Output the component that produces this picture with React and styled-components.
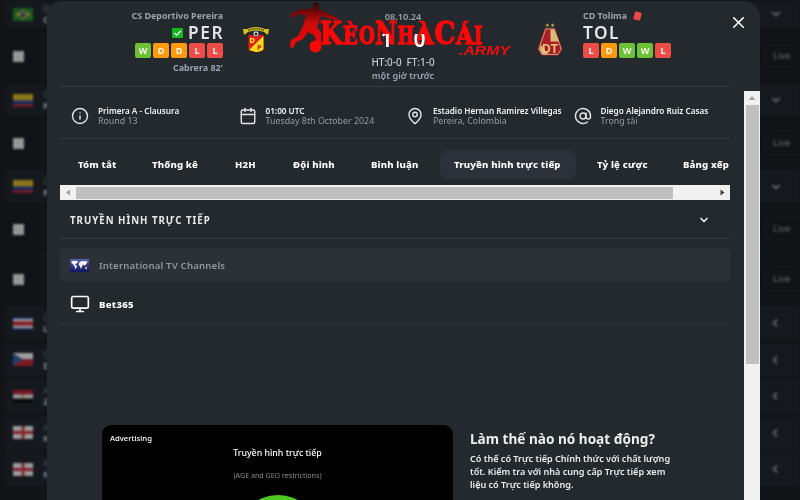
import React from "react";
import styled, { createGlobalStyle } from "styled-components";
import { Info, Calendar, MapPin, AtSign, Monitor, X, ChevronDown, ChevronLeft } from "lucide-react";

const GlobalStyle = createGlobalStyle`
  * {
    box-sizing: border-box;
  }
  body {
    margin: 0;
    background: #111316;
    font-family: 'Noto Sans', sans-serif;
    overflow: hidden;
  }
  svg {
    display: block;
    flex-shrink: 0;
  }
`;

const Page = styled.div`
  position: relative;
  width: 800px;
  height: 500px;
  overflow: hidden;
`;

/* ---------- dimmed list behind the dialog ---------- */

const List = styled.div`
  display: flex;
  flex-direction: column;
  height: 500px;
  overflow: hidden;
  filter: blur(0.8px);
`;

const ListRow = styled.div`
  display: flex;
  align-items: center;
  flex-shrink: 0;
  height: ${(p) => p.$h}px;
  margin: 0 0 ${(p) => p.$gap || 0}px 5px;
  padding-left: 8px;
  background: ${(p) => (p.$head ? "#15191d" : "transparent")};
  box-shadow: ${(p) => (p.$line ? "0 -1px 0 #181b1f" : "none")};
  color: #595e62;
`;

const League = styled.div`
  margin-left: 10px;
  width: 700px;
  font-size: 9px;
  line-height: 11px;
  color: #4a4f53;

  b {
    display: block;
    color: #7d8083;
  }
`;

const Check = styled.div`
  width: 11px;
  height: 11px;
  background: #959595;
`;

const Right = styled.div`
  margin-left: auto;
  width: 35px;
  padding-left: ${(p) => p.$pad || 0}px;
`;

const LiveButton = styled.div`
  width: 44px;
  height: 24px;
  padding-left: 7px;
  border: 1px solid #1b1e21;
  border-radius: 4px;
  font-size: 9.3px;
  font-weight: 500;
  line-height: 21px;
  color: #626365;
`;

/* ---------- dialog ---------- */

const Dialog = styled.div`
  position: absolute;
  left: 47px;
  top: 1px;
  width: 713px;
  height: 499px;
  display: flex;
  flex-direction: column;
  border-radius: 16px 16px 0 0;
  background: #24292d;
  overflow: hidden;
`;

const Header = styled.div`
  display: grid;
  grid-template-columns: 163px 66px 228px 66px 110px 1fr;
  height: 86px;
  margin: 0 30px 0 13px;
  padding-top: 9px;
  border-bottom: 1px solid #363b44;
`;

const Team = styled.div`
  display: flex;
  flex-direction: column;
  align-items: ${(p) => (p.$right ? "flex-end" : "flex-start")};
  color: #9ea1b0;
  font-size: 8.95px;
  font-weight: 700;
  line-height: 12px;
  white-space: nowrap;
`;

const TeamName = styled.div`
  display: flex;
  align-items: center;
  gap: 7px;
`;

const Short = styled.div`
  display: flex;
  align-items: center;
  gap: 5px;
  height: 21px;
  margin-right: -1px;
  font-size: 17.3px;
  font-weight: 600;
  letter-spacing: 1.5px;
  color: #e4e5e8;
`;

const RedCard = styled.div`
  width: 7px;
  height: 8px;
  border-radius: 1px;
  background: #ee4a45;
  transform: rotate(16deg);
`;

const Form = styled.div`
  display: flex;
  gap: 2px;
  margin-bottom: 4px;
`;

const colors = { W: "#6cc234", D: "#ff9a0a", L: "#ee4c47" };

const Badge = styled.span`
  width: 16px;
  height: 15px;
  border-radius: 2px;
  background: ${(p) => colors[p.$r]};
  color: #f6f3ec;
  font-size: 9px;
  line-height: 16px;
  text-align: center;
`;

const CrestBox = styled.div`
  display: flex;
  justify-content: center;
  padding-top: ${(p) => p.$top}px;
`;

const Center = styled.div`
  position: relative;
  z-index: 2;
  text-align: center;
  font-size: 9.2px;
  font-weight: 600;
  line-height: 13px;
  color: #9ea1b0;
`;

const Score = styled.div`
  display: flex;
  justify-content: center;
  gap: 21px;
  height: 33px;
  font-size: 21px;
  font-weight: 600;
  line-height: 33px;
  color: #fff;
  clip-path: inset(11px 0 0 0);
`;

const Halves = styled.div`
  color: #c9ccd3;
  font-size: 9.9px;
  font-weight: 500;
  word-spacing: 2.5px;
`;

const Close = styled.div`
  justify-self: end;
  padding-top: 3px;
  margin-right: -18px;
  color: #fff;
`;

const Logo = styled.svg`
  position: absolute;
  left: 239px;
  top: -1px;
`;

const Body = styled.div`
  display: flex;
  flex: 1;
  min-height: 0;
`;

const Content = styled.div`
  flex: 1;
  min-width: 0;
  padding: 0 14px 0 13px;
  overflow: hidden;
`;

const VScroll = styled.div`
  display: flex;
  flex-direction: column;
  align-items: center;
  width: 16px;
  margin-top: 4px;
  background: #f1f1f1;
`;

const VThumb = styled.div`
  width: 13px;
  height: 259px;
  margin-top: 4px;
  background: #c0c0c0;
`;

const InfoGrid = styled.div`
  display: grid;
  grid-template-columns: repeat(4, 1fr);
  height: 52px;
  padding-top: 3px;
  border-bottom: 1px solid #363b44;
`;

const InfoItem = styled.div`
  display: flex;
  align-items: center;
  gap: 9px;
  padding: 4px 0 0 11px;
  color: #e2e4e6;
  white-space: nowrap;
`;

const InfoText = styled.div`
  font-size: 8.85px;
  line-height: 11px;
  color: #9599a4;

  b {
    display: block;
    font-size: 8.2px;
    font-weight: 600;
    color: #f2f3f4;
  }
`;

const Tabs = styled.div`
  display: flex;
  gap: 7px;
  padding: 11px 0 6px 4px;
  overflow: hidden;
`;

const Tab = styled.div`
  flex-shrink: 0;
  width: ${(p) => p.$w}px;
  height: 29px;
  padding-left: 14px;
  border-radius: 8px;
  background: ${(p) => (p.$active ? "#2c313a" : "transparent")};
  color: #fff;
  font-size: 9.6px;
  font-weight: 800;
  letter-spacing: 0.15px;
  line-height: 30px;
  white-space: nowrap;
`;

const HScroll = styled.div`
  display: flex;
  align-items: center;
  height: 15px;
  padding-right: 5px;
  background: #f1f1f1;
`;

const HThumb = styled.div`
  width: 597px;
  height: 12px;
  margin-left: 3px;
  margin-right: auto;
  background: #c0c0c0;
`;

const SectionHead = styled.div`
  display: flex;
  align-items: center;
  justify-content: space-between;
  height: 39px;
  padding: 2px 20px 0 10px;
  border-bottom: 1px solid #363b44;
  color: #e8e9ea;
  font-size: 9.7px;
  font-weight: 700;
  letter-spacing: 0.98px;
`;

const Channels = styled.div`
  display: flex;
  align-items: center;
  gap: 10px;
  height: 34px;
  margin-top: 9px;
  padding-left: 10px;
  border-radius: 5px;
  background: #2c3138;
  color: #92969f;
  font-size: 9.6px;
  font-weight: 600;
  letter-spacing: 0.18px;
`;

const Provider = styled.div`
  display: flex;
  align-items: center;
  gap: 9px;
  height: 42px;
  padding: 3px 0 0 10px;
  border-bottom: 1px dotted #3a4045;
  color: #fff;
  font-size: 9.6px;
  font-weight: 800;
  letter-spacing: 0.3px;
`;

const Promo = styled.div`
  display: flex;
  gap: 17px;
  margin: 101px 0 0 42px;
`;

const Advert = styled.div`
  display: flex;
  flex-direction: column;
  align-items: center;
  width: 351px;
  height: 76px;
  padding-top: 7px;
  border-radius: 9px 9px 0 0;
  background: #000;
  color: #fff;
  overflow: hidden;
`;

const AdLabel = styled.div`
  align-self: flex-start;
  margin-left: 8px;
  font-size: 7.7px;
  font-weight: 500;
  line-height: 12px;
`;

const AdTitle = styled.div`
  margin-top: 2px;
  font-size: 8.8px;
  font-weight: 500;
  line-height: 14px;
`;

const AdNote = styled.div`
  margin: 9px 0 14px;
  color: #8b8b8b;
  font-size: 7.1px;
  line-height: 12px;
`;

const Play = styled.div`
  flex-shrink: 0;
  width: 82px;
  height: 82px;
  border-radius: 50%;
  background: #4bc91f;
`;

const How = styled.div`
  padding-top: 5px;
  color: #eceded;
  font-size: 9.07px;
  font-weight: 600;
  line-height: 13px;
  white-space: nowrap;
`;

const HowTitle = styled.div`
  margin-bottom: 4px;
  font-size: 13.6px;
  font-weight: 700;
  line-height: 18px;
`;

function Flag({ kind }) {
  return (
    <svg width="20" height="13" viewBox="0 0 20 13" opacity="0.8">
      {kind === "br" && (
        <>
          <rect width="20" height="13" fill="#146824" />
          <path d="M10 1.5L18 6.5L10 11.5L2 6.5Z" fill="#9c8c20" />
          <circle cx="10" cy="6.5" r="3" fill="#1c2f65" />
          <path d="M7.3 5.6Q10 5.2 12.7 7.4" stroke="#aaa" fill="none" />
        </>
      )}
      {kind === "co" && (
        <>
          <rect width="20" height="13" fill="#a98c18" />
          <rect y="6.5" width="20" height="3.5" fill="#183072" />
          <rect y="10" width="20" height="3" fill="#861c27" />
        </>
      )}
      {kind === "cr" && (
        <>
          <rect width="20" height="13" fill="#1c3670" />
          <rect y="2" width="20" height="9" fill="#c0c0c0" />
          <rect y="4.2" width="20" height="4.6" fill="#a02632" />
        </>
      )}
      {kind === "cz" && (
        <>
          <rect width="20" height="6.5" fill="#c0c0c0" />
          <rect y="6.5" width="20" height="6.5" fill="#97191f" />
          <path d="M0 0L10 6.5L0 13Z" fill="#24497c" />
        </>
      )}
      {kind === "eg" && (
        <>
          <rect width="20" height="4.4" fill="#8d1624" />
          <rect y="4.4" width="20" height="4.3" fill="#b9b9b9" />
          <rect y="8.7" width="20" height="4.3" fill="#080808" />
          <circle cx="10" cy="6.5" r="1.7" fill="#a08947" />
        </>
      )}
      {kind === "en" && (
        <>
          <rect width="20" height="13" fill="#bcbcbc" />
          <path d="M8.6 0h2.8v13H8.6zM0 5.1h20v2.8H0z" fill="#a42231" />
        </>
      )}
    </svg>
  );
}

function HeadRow({ flag, h, gap, open, top, bottom }) {
  return (
    <ListRow $h={h} $gap={gap} $head>
      <Flag kind={flag} />
      <League>
        {top}
        <b>{bottom}</b>
      </League>
      <Right $pad={open ? 5 : 4}>
        {open ? <ChevronDown size={12} strokeWidth={4} /> : <ChevronLeft size={12} strokeWidth={4} />}
      </Right>
    </ListRow>
  );
}

function MatchRow({ h, gap, line }) {
  return (
    <ListRow $h={h} $gap={gap} $line={line}>
      <Check />
      <Right>
        <LiveButton>Live</LiveButton>
      </Right>
    </ListRow>
  );
}

function PereiraCrest() {
  return (
    <svg width="28" height="27" viewBox="0 0 28 27">
      <path d="M1 3L5 3Q14 -1 23 3L27 3L26 9L22 6Q14 3 6 6L2 9Z" fill="#d8c51c" />
      <path d="M6 4.6Q14 0.9 22 4.6" fill="none" stroke="#4a4510" strokeWidth="1.6" strokeDasharray="1.2 .7" />
      <path d="M6.5 9H21.5V23Q21 25 14 26Q7 25 6.5 23Z" fill="#e52018" stroke="#8b1612" strokeWidth=".6" />
      <path d="M21.5 10V23Q20 25.5 14 26L7 24Z" fill="#f5de18" />
      <circle cx="14" cy="7.8" r="2.8" fill="#e8e8e8" stroke="#222" strokeWidth=".6" />
      <path d="M14 6.3L15.5 7.5L14.9 9.2H13.1L12.5 7.5Z" fill="#222" />
      <text x="7.6" y="16.8" fontFamily="Noto Sans" fontWeight="800" fontSize="7.5" fill="#f8e420">D</text>
      <text x="15" y="23.6" fontFamily="Noto Sans" fontWeight="800" fontSize="7.5" fill="#de231c">P</text>
    </svg>
  );
}

function Star({ x }) {
  return (
    <path
      transform={`translate(${x} 0)`}
      d="M0 0L.6 1.4L2 1.5L.9 2.5L1.3 4L0 3.2L-1.3 4L-.9 2.5L-2 1.5L-.6 1.4Z"
      fill="#bfa250"
    />
  );
}

function TolimaCrest() {
  return (
    <svg width="26" height="34" viewBox="0 0 26 34">
      <Star x={10.3} />
      <Star x={15.7} />
      <path d="M8 5H18L25.5 26L21.5 32.5H4.5L0.5 26Z" fill="#9c1a22" />
      <path d="M8.7 6H17.3L24.2 26L20.8 31.5H5.2L1.8 26Z" fill="#ab1c25" stroke="#e4d29a" strokeWidth=".7" />
      <path d="M13.5 6.4H17L22 18.5H13.5Z" fill="#d7bd76" />
      <path d="M2.6 26L5.5 31H11L4 22Z" fill="#d7bd76" />
      <text x="5" y="29.5" fontFamily="Liberation Sans" fontWeight="700" fontSize="12.5" fill="#dfc782" textLength="16" lengthAdjust="spacingAndGlyphs">DT</text>
    </svg>
  );
}

function WorldFlag() {
  return (
    <svg width="19" height="13" viewBox="0 0 19 13">
      <defs>
        <linearGradient id="sea" x1="0" y1="0" x2="0" y2="1">
          <stop offset="0" stopColor="#5962a8" />
          <stop offset="1" stopColor="#10155c" />
        </linearGradient>
      </defs>
      <rect width="19" height="13" fill="url(#sea)" />
      <path d="M1 3L3 1.8L7.5 2L8 3L6 5L5 5.5L7 7L6.5 8.5L5.3 10.5L4.7 7.5L3.3 5.5L1.8 4ZM9 4L10.5 2.5L13 2L17.5 2.5L17 4L15.8 5.5L14.5 7L13.5 5.5L12.3 6.5L11 10L9.8 7L8.7 6ZM15 8.5L16.8 8.3L17 10L15.5 10Z" fill="#f4f6ff" />
    </svg>
  );
}

// letter, left edge, width, font size
const brand = [
  ["K", 320, 22, 31], ["È", 343, 15, 24.5], ["O", 359, 16, 24.5], ["N", 375, 22, 31], ["H", 397.5, 17, 24.5],
  ["À", 414.5, 19, 24.5], ["C", 434.5, 21, 31], ["Á", 456, 17.5, 24.5], ["I", 474, 8.5, 24.5],
];

function BrandLogo() {
  return (
    <Logo width="230" height="60" viewBox="286 0 230 60">
      <defs>
        <linearGradient id="kick" x1="0" y1="0" x2="0" y2="1">
          <stop offset="0" stopColor="#280506" />
          <stop offset=".45" stopColor="#c80a0a" />
          <stop offset="1" stopColor="#fb0707" />
        </linearGradient>
      </defs>
      <path
        d="M313 3Q316 1 319 4Q319.5 7 318 9.5L325 12L331 15L338 18L337 20L330 19L321 16L319 22L317 27L321.5 33L321 42L316 42L315 36L308 32L303 39L296 42L293 48L290 47L291 40L298 36L303 26L306 16L299 14L293 17L289 17L295 11.5L302 9L311 9L313 7Z"
        fill="url(#kick)"
      />
      <circle cx="315.5" cy="46.5" r="6" fill="#fb0707" />
      <text y="44" fontFamily="DejaVu Serif" fontWeight="700" fill="#fb0707" stroke="#fb0707" strokeWidth="1.3">
        {brand.map(([ch, x, w, size]) => (
          <tspan key={x} x={x} fontSize={size} textLength={w} lengthAdjust="spacingAndGlyphs">
            {ch}
          </tspan>
        ))}
      </text>
      <text x="459" y="55" fontFamily="Liberation Sans" fontWeight="700" fontStyle="italic" fontSize="13.5" fill="#f30b0b" textLength="51" lengthAdjust="spacingAndGlyphs">
        .ARMY
      </text>
    </Logo>
  );
}

const tabs = [
  ["Tóm tắt", 67], ["Thống kê", 76], ["H2H", 51], ["Đội hình", 71], ["Bình luận", 76],
  ["Truyền hình trực tiếp", 136], ["Tỷ lệ cược", 79], ["Bảng xếp", 76],
];

const App = () => {
  return (
    <Page>
      <GlobalStyle />
      <List>
        <HeadRow flag="br" h={28} open top="Brazil" bottom="Campeonato" />
        <MatchRow h={56} />
        <HeadRow flag="co" h={32} open top="Colombia" bottom="Primera A" />
        <MatchRow h={54} />
        <HeadRow flag="co" h={33} open top="Colombia" bottom="Primera A" />
        <MatchRow h={52} />
        <MatchRow h={48} gap={3} line />
        <HeadRow flag="cr" h={34} gap={2.6} top="Costa Rica" bottom="Liga" />
        <HeadRow flag="cz" h={34} gap={2.6} top="Czech" bottom="Divize" />
        <HeadRow flag="eg" h={34} gap={2.6} top="Ai Cập" bottom="2nd Division" />
        <HeadRow flag="en" h={34} gap={2.6} top="Anh" bottom="National" />
        <HeadRow flag="en" h={34} gap={2.6} top="Anh" bottom="National" />
      </List>

      <Dialog>
        <BrandLogo />
        <Header>
          <Team $right>
            <TeamName>CS Deportivo Pereira</TeamName>
            <Short>
              <svg width="11" height="10" viewBox="0 0 11 10">
                <rect width="11" height="10" rx="1" fill="#12b81c" />
                <path d="M2.5 5L4.7 7.2L9 2.8" fill="none" stroke="#fff" strokeWidth="1.3" />
              </svg>
              PER
            </Short>
            <Form>
              {["W", "D", "D", "L", "L"].map((r, i) => (
                <Badge key={i} $r={r}>{r}</Badge>
              ))}
            </Form>
            Cabrera 82'
          </Team>
          <CrestBox $top={16}>
            <PereiraCrest />
          </CrestBox>
          <Center>
            08.10.24
            <Score>
              <span>1</span>
              <span>0</span>
            </Score>
            <Halves>HT:0-0 FT:1-0</Halves>
            một giờ trước
          </Center>
          <CrestBox $top={13}>
            <TolimaCrest />
          </CrestBox>
          <Team>
            <TeamName>
              CD Tolima <RedCard />
            </TeamName>
            <Short>TOL</Short>
            <Form>
              {["L", "D", "W", "W", "L"].map((r, i) => (
                <Badge key={i} $r={r}>{r}</Badge>
              ))}
            </Form>
          </Team>
          <Close>
            <X size={19} strokeWidth={2} />
          </Close>
        </Header>

        <Body>
          <Content>
            <InfoGrid>
              <InfoItem>
                <Info size={18} strokeWidth={1.9} />
                <InfoText>
                  <b>Primera A - Clausura</b>Round 13
                </InfoText>
              </InfoItem>
              <InfoItem>
                <Calendar size={18} strokeWidth={1.9} />
                <InfoText>
                  <b>01:00 UTC</b>Tuesday 8th October 2024
                </InfoText>
              </InfoItem>
              <InfoItem>
                <MapPin size={18} strokeWidth={1.9} />
                <InfoText>
                  <b>Estadio Hernan Ramirez Villegas</b>Pereira, Colombia
                </InfoText>
              </InfoItem>
              <InfoItem>
                <AtSign size={18} strokeWidth={1.9} />
                <InfoText>
                  <b>Diego Alejandro Ruiz Casas</b>Trọng tài
                </InfoText>
              </InfoItem>
            </InfoGrid>

            <Tabs>
              {tabs.map(([label, w]) => (
                <Tab key={label} $w={w} $active={label === "Truyền hình trực tiếp"}>
                  {label}
                </Tab>
              ))}
            </Tabs>
            <HScroll>
              <svg width="13" height="7" viewBox="0 0 13 7">
                <path d="M10 0.5V6.5L6 3.5Z" fill="#a0a0a0" />
              </svg>
              <HThumb />
              <svg width="5" height="7" viewBox="0 0 5 7">
                <path d="M0.5 0.5V6.5L4.5 3.5Z" fill="#404040" />
              </svg>
            </HScroll>

            <SectionHead>
              TRUYỀN HÌNH TRỰC TIẾP
              <ChevronDown size={12} strokeWidth={3.5} />
            </SectionHead>
            <Channels>
              <WorldFlag />
              International TV Channels
            </Channels>
            <Provider>
              <Monitor size={20} strokeWidth={2} />
              Bet365
            </Provider>

            <Promo>
              <Advert>
                <AdLabel>Advertising</AdLabel>
                <AdTitle>Truyền hình trực tiếp</AdTitle>
                <AdNote>(AGE and GEO restrictions)</AdNote>
                <Play />
              </Advert>
              <How>
                <HowTitle>Làm thế nào nó hoạt động?</HowTitle>
                Có thể có Trực tiếp Chính thức với chất lượng
                <br />
                tốt. Kiểm tra với nhà cung cấp Trực tiếp xem
                <br />
                liệu có Trực tiếp không.
              </How>
            </Promo>
          </Content>
          <VScroll>
            <svg width="16" height="10" viewBox="0 0 16 10">
              <path d="M4.5 9L8 5L11.5 9Z" fill="#a0a0a0" />
            </svg>
            <VThumb />
          </VScroll>
        </Body>
      </Dialog>
    </Page>
  );
};

export default App;
